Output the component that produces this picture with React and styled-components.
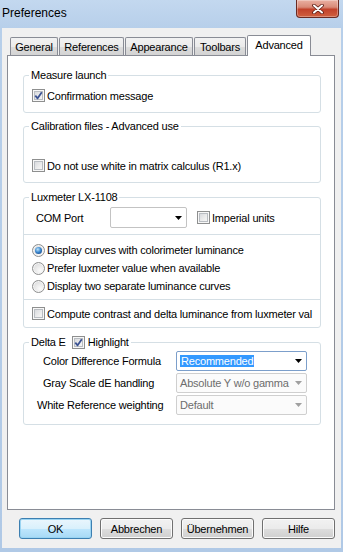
import React from 'react';
import styled, { createGlobalStyle } from 'styled-components';

const UI = `"Liberation Sans", Arial, sans-serif`;

const Global = createGlobalStyle`
  html, body { margin: 0; padding: 0; width: 343px; height: 552px; overflow: hidden; background: #b8cfe9; }
  #root { width: 343px; height: 552px; }
  * { box-sizing: border-box; }
`;

const Window = styled.div`
  width: 343px;
  height: 552px;
  display: flex;
  flex-direction: column;
  background: linear-gradient(to bottom, #c3d8ef 0px, #b7cfea 28px, #b0c9e6 100%);
  font-family: ${UI};
  font-size: 11px;
  color: #000;
`;

const TitleBar = styled.div`
  height: 28px;
  flex: none;
  display: flex;
  justify-content: space-between;
  align-items: flex-start;
`;

const Title = styled.div`
  font-size: 12px;
  line-height: 14px;
  padding: 6px 0 0 2px;
`;

const CloseBtn = styled.div`
  width: 43px;
  height: 18px;
  margin-right: 4px;
  border: 1px solid #6a2a22;
  border-top: none;
  border-radius: 0 0 4px 4px;
  background: linear-gradient(to bottom, #eab0a2 0%, #d98a78 42%, #c2422b 55%, #d0603f 100%);
  box-shadow: inset 0 0 0 1px rgba(255, 255, 255, 0.3);
  display: flex;
  align-items: center;
  justify-content: center;
`;

const Client = styled.div`
  flex: 1;
  margin: 0 2px 4px 2px;
  background: #f0f0f0;
  display: flex;
  flex-direction: column;
  padding: 7px 6px 9px 5px;
  letter-spacing: -0.2px;
`;

const TabRow = styled.div`
  height: 20px;
  display: flex;
  align-items: flex-end;
  padding-left: 3px;
`;

const Tab = styled.div`
  width: ${(p) => p.$w}px;
  height: ${(p) => (p.$active ? 21 : 18)}px;
  margin-right: 1px;
  margin-bottom: ${(p) => (p.$active ? -1 : 0)}px;
  border: 1px solid #898c95;
  border-bottom: none;
  border-radius: 2px 2px 0 0;
  background: ${(p) =>
    p.$active ? '#fff' : 'linear-gradient(to bottom, #f2f2f2 0%, #ebebeb 50%, #dddddd 51%, #d3d3d3 100%)'};
  position: relative;
  z-index: ${(p) => (p.$active ? 2 : 0)};
  display: flex;
  justify-content: center;
  align-items: ${(p) => (p.$active ? 'flex-start' : 'center')};
  padding-top: ${(p) => (p.$active ? 2 : 0)}px;
  line-height: 14px;
  white-space: nowrap;
`;

const Panel = styled.div`
  height: 455px;
  flex: none;
  border: 1px solid #898c95;
  background: #fff;
  display: flex;
  flex-direction: column;
  padding: 0 13px 0 15px;
  position: relative;
  z-index: 1;
`;

const Group = styled.fieldset`
  margin: ${(p) => p.$mt}px 0 0 0;
  padding: 0 0 ${(p) => p.$pb}px 0;
  border: 1px solid #d5dfe5;
  border-radius: 3px;
  min-width: 0;
  width: 298px;
`;

const Legend = styled.legend`
  margin-left: 5px;
  padding: 0 2px;
  line-height: 14px;
  height: 14px;
  font-size: 11px;
`;

const LegendInner = styled.span`
  display: inline-flex;
  align-items: center;
  height: 14px;
`;

const Spacer = styled.span`
  width: ${(p) => p.$w}px;
  flex: none;
`;

const CheckRow = styled.div`
  display: flex;
  align-items: center;
  height: 13px;
  margin-top: ${(p) => p.$mt || 0}px;
  padding-left: ${(p) => (p.$pl === undefined ? 8 : p.$pl)}px;
  gap: 2px;
  white-space: nowrap;
  overflow: hidden;
`;

const CheckBoxBox = styled.span`
  width: 13px;
  height: 13px;
  flex: none;
  border: 1px solid #8e8f8f;
  background: linear-gradient(135deg, #cfd2d7 0%, #eeeeee 60%, #fbfbfb 100%);
  box-shadow: inset 0 0 0 1px #f7f7f7, inset 0 0 0 2px #b9bdc2;
  display: inline-flex;
  align-items: center;
  justify-content: center;
`;

const CheckBox = ({ checked }) => (
  <CheckBoxBox>
    {checked && (
      <svg width="9" height="9" viewBox="0 0 9 9">
        <path d="M1.3 4.6 L3.6 7.3 L7.8 1.2" fill="none" stroke="#3c5393" strokeWidth="1.8" strokeLinejoin="round" />
      </svg>
    )}
  </CheckBoxBox>
);

const RadioCircle = styled.span`
  width: 13px;
  height: 13px;
  flex: none;
  border-radius: 50%;
  border: 1px solid #8e8f8f;
  background: radial-gradient(circle at 65% 70%, #fbfbfb 0%, #e6e6e6 55%, #c9ccd1 100%);
  box-shadow: inset 0 0 0 1px #f5f5f5;
  display: inline-flex;
  align-items: center;
  justify-content: center;
`;

const RadioDot = styled.span`
  width: 7px;
  height: 7px;
  border-radius: 50%;
  background: radial-gradient(circle at 40% 35%, #bfe4fb 0%, #3d8ad0 45%, #1a4f94 80%, #173e72 100%);
`;

const Radio = ({ checked }) => <RadioCircle>{checked && <RadioDot />}</RadioCircle>;

const RadioRow = styled.div`
  display: flex;
  align-items: center;
  height: 18px;
  padding-left: 8px;
  gap: 2px;
  margin-top: ${(p) => p.$mt || 0}px;
  white-space: nowrap;
`;

const Separator = styled.div`
  height: 1px;
  background: #d5dfe5;
  margin-top: ${(p) => p.$mt}px;
`;

const ComRow = styled.div`
  display: flex;
  align-items: center;
  height: 21px;
  margin-top: 3px;
`;

const FieldLabel = styled.span`
  width: ${(p) => p.$w}px;
  padding-left: ${(p) => p.$pl}px;
  flex: none;
  white-space: nowrap;
`;

const ComboBox = styled.div`
  width: ${(p) => p.$w}px;
  height: ${(p) => p.$h}px;
  flex: none;
  border: 1px solid ${(p) => (p.$focus ? '#7c9fcb' : p.$disabled ? '#cfcfcf' : '#c3c3c3')};
  border-radius: 2px;
  background: ${(p) => (p.$disabled ? '#fbfbfb' : '#fff')};
  color: ${(p) => (p.$disabled ? '#6d6d6d' : '#000')};
  display: flex;
  align-items: center;
  padding: 0 4px 0 2px;
  white-space: nowrap;
  overflow: hidden;
`;

const ComboText = styled.span`
  flex: 1;
  line-height: 15px;
  padding: 0 1px;
`;

const Highlight = styled.span`
  background: #3399ff;
  color: #fff;
  padding: 0 1px;
  line-height: 15px;
`;

const Arrow = ({ color }) => (
  <svg width="7" height="4" viewBox="0 0 7 4" style={{ flex: 'none' }}>
    <path d="M0 0 H7 L3.5 4 Z" fill={color} />
  </svg>
);

const SelectRow = styled.div`
  display: flex;
  align-items: center;
  margin-top: ${(p) => p.$mt}px;
`;

const ButtonRow = styled.div`
  display: flex;
  justify-content: flex-end;
  gap: 8px;
  margin-top: 8px;
  height: 21px;
`;

const Button = styled.button`
  width: 73px;
  height: 21px;
  padding: 0;
  font-family: ${UI};
  font-size: 11px;
  letter-spacing: -0.2px;
  color: #000;
  border: 1px solid ${(p) => (p.$default ? '#3c7fb1' : '#707070')};
  border-radius: 3px;
  background: ${(p) =>
    p.$default
      ? 'linear-gradient(to bottom, #eaf6fd 0%, #d9f0fc 50%, #bee6fd 51%, #a7d9f5 100%)'
      : 'linear-gradient(to bottom, #f2f2f2 0%, #ebebeb 50%, #dddddd 51%, #cfcfcf 100%)'};
  box-shadow: inset 0 0 0 1px ${(p) => (p.$default ? '#9ad4f2' : '#fbfbfb')};
`;

const tabs = [
  ['General', 48],
  ['References', 65],
  ['Appearance', 68],
  ['Toolbars', 52],
  ['Advanced', 64, true],
];

export default function App() {
  return (
    <>
      <Global />
      <Window>
        <TitleBar>
          <Title>Preferences</Title>
          <CloseBtn>
            <svg width="12" height="10" viewBox="0 0 12 10">
              <path d="M2 1.5 L10 8.5 M10 1.5 L2 8.5" stroke="#5a1a12" strokeWidth="3.6" strokeLinecap="round" />
              <path d="M2 1.5 L10 8.5 M10 1.5 L2 8.5" stroke="#ffffff" strokeWidth="2" strokeLinecap="round" />
            </svg>
          </CloseBtn>
        </TitleBar>
        <Client>
          <TabRow>
            {tabs.map(([t, w, a]) => (
              <Tab key={t} $w={w} $active={a}>
                {t}
              </Tab>
            ))}
          </TabRow>
          <Panel>
            <Group $mt={12} $pb={10}>
              <Legend>Measure launch</Legend>
              <CheckRow $mt={7}>
                <CheckBox checked />
                <span>Confirmation message</span>
              </CheckRow>
            </Group>

            <Group $mt={6} $pb={10}>
              <Legend>Calibration files - Advanced use</Legend>
              <CheckRow $mt={26}>
                <CheckBox />
                <span>Do not use white in matrix calculus (R1.x)</span>
              </CheckRow>
            </Group>

            <Group $mt={7} $pb={7}>
              <Legend>Luxmeter LX-1108</Legend>
              <ComRow>
                <FieldLabel $w={86} $pl={12}>COM Port</FieldLabel>
                <ComboBox $w={77} $h={21}>
                  <ComboText />
                  <Arrow color="#000" />
                </ComboBox>
                <CheckRow $pl={10}>
                  <CheckBox />
                  <span>Imperial units</span>
                </CheckRow>
              </ComRow>
              <Separator $mt={6} />
              <RadioRow $mt={6}>
                <Radio checked />
                <span>Display curves with colorimeter luminance</span>
              </RadioRow>
              <RadioRow>
                <Radio />
                <span>Prefer luxmeter value when available</span>
              </RadioRow>
              <RadioRow>
                <Radio />
                <span>Display two separate luminance curves</span>
              </RadioRow>
              <Separator $mt={4} />
              <CheckRow $mt={7}>
                <CheckBox />
                <span>Compute contrast and delta luminance from luxmeter val</span>
              </CheckRow>
            </Group>

            <Group $mt={7} $pb={9}>
              <Legend>
                <LegendInner>
                  <span>Delta E</span>
                  <Spacer $w={6} />
                  <CheckBox checked />
                  <Spacer $w={3} />
                  <span>Highlight</span>
                </LegendInner>
              </Legend>
              <SelectRow $mt={2}>
                <FieldLabel $w={152} $pl={19}>Color Difference Formula</FieldLabel>
                <ComboBox $w={131} $h={20} $focus>
                  <ComboText>
                    <Highlight>Recommended</Highlight>
                  </ComboText>
                  <Arrow color="#000" />
                </ComboBox>
              </SelectRow>
              <SelectRow $mt={2}>
                <FieldLabel $w={152} $pl={19}>Gray Scale dE handling</FieldLabel>
                <ComboBox $w={131} $h={20} $disabled>
                  <ComboText>Absolute Y w/o gamma</ComboText>
                  <Arrow color="#a0a0a0" />
                </ComboBox>
              </SelectRow>
              <SelectRow $mt={2}>
                <FieldLabel $w={152} $pl={13}>White Reference weighting</FieldLabel>
                <ComboBox $w={131} $h={20} $disabled>
                  <ComboText>Default</ComboText>
                  <Arrow color="#a0a0a0" />
                </ComboBox>
              </SelectRow>
            </Group>
          </Panel>
          <ButtonRow>
            <Button $default>OK</Button>
            <Button>Abbrechen</Button>
            <Button>Übernehmen</Button>
            <Button>Hilfe</Button>
          </ButtonRow>
        </Client>
      </Window>
    </>
  );
}
